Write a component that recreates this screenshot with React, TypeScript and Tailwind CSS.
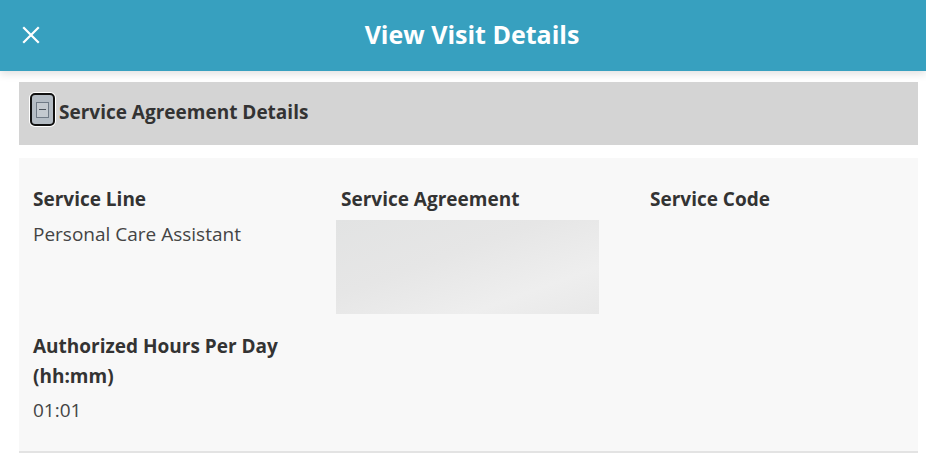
import React from "react";

export default function App() {
  return (
    <div className="w-[926px] h-[456px] bg-white overflow-hidden" style={{ fontFamily: '"Open Sans", sans-serif' }}>
      <header className="relative h-[71px] bg-[#37a0bf] flex items-center justify-center shadow-[0_3px_8px_rgba(0,0,0,0.12)] z-10">
        <button className="absolute left-[21px] top-[25px] w-[20px] h-[20px] flex items-center justify-center">
          <svg width="18" height="18" viewBox="0 0 18 18">
            <path d="M2 2 L16 16 M16 2 L2 16" stroke="white" strokeWidth="2.2" strokeLinecap="square" />
          </svg>
        </button>
        <h1 className="text-white text-[25px] font-bold leading-none -mt-[2px] pl-[18px]">View Visit Details</h1>
      </header>
      <div className="px-[19px] pt-[11px] w-[937px]">
        <div className="w-[899px] h-[63px] bg-[#d4d4d4] flex items-center pl-[10px]">
          <div className="self-start mt-[10px] w-[27px] h-[35px] rounded-[6px] bg-white p-[1px] flex">
            <div className="flex-1 rounded-[5px] border-[2.5px] border-[#111] bg-[#b4bcc4] flex items-center justify-center">
              <div className="w-[13px] h-[16px] border border-[#6f7a86] bg-[#c3c9cf] flex items-center justify-center">
                <div className="w-[7px] h-[1.5px] bg-[#4a525a]" />
              </div>
            </div>
          </div>
          <span className="ml-[3px] text-[19px] font-bold text-[#333] -mt-[3px]">Service Agreement Details</span>
        </div>
        <div className="w-[899px] mt-[13px] bg-[#f8f8f8] border-b-2 border-[#e3e3e3] pl-[14px] pt-[28px] pb-[28px]">
          <div className="grid grid-cols-[308px_309px_1fr]">
            <div>
              <div className="text-[19px] font-bold text-[#333] leading-[26px]">Service Line</div>
              <div className="text-[19px] text-[#444] leading-[26px] mt-[9px]">Personal Care Assistant</div>
            </div>
            <div>
              <div className="text-[19px] font-bold text-[#333] leading-[26px]">Service Agreement</div>
              <div className="-ml-[5px] mt-[8px] w-[263px] h-[94px] bg-[linear-gradient(160deg,#e2e3e3_0%,#e6e6e6_40%,#eeeeee_75%,#e8e8e8_100%)]" />
            </div>
            <div>
              <div className="text-[19px] font-bold text-[#333] leading-[26px]">Service Code</div>
            </div>
          </div>
          <div className="mt-[17px] w-[290px]">
            <div className="text-[19px] font-bold text-[#333] leading-[30px]">Authorized Hours Per Day (hh:mm)</div>
            <div className="text-[19px] text-[#444] leading-[26px] mt-[6px]">01:01</div>
          </div>
        </div>
      </div>
    </div>
  );
}
